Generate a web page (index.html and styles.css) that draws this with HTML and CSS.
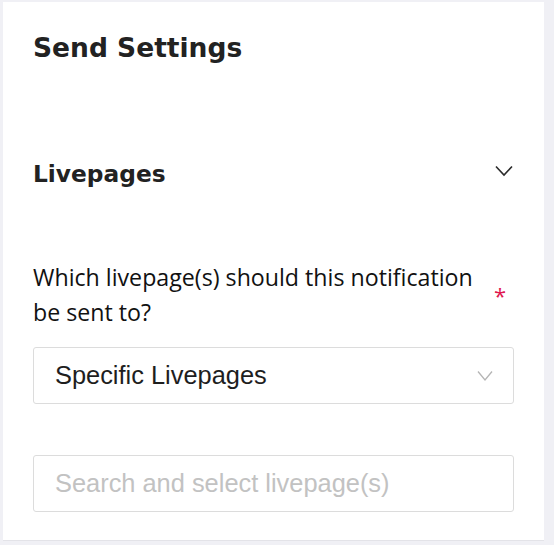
FILE: index.html
```html
<!DOCTYPE html>
<html>
<head>
<meta charset="utf-8">
<link rel="stylesheet" href="styles.css">
</head>
<body>
<div class="panel">
  <h1 class="title">Send Settings</h1>
  <div class="section-head">
    <h2 class="section-title">Livepages</h2>
    <svg class="chev" width="18" height="12" viewBox="0 0 18 12"><path d="M1 1.5 L9 10 L17 1.5" fill="none" stroke="#2b2b2b" stroke-width="1.6"/></svg>
  </div>
  <div class="field-label">
    <span class="label-text">Which livepage(s) should this notification be sent to?</span>
    <span class="req">*</span>
  </div>
  <div class="select">
    <span class="select-value">Specific Livepages</span>
    <svg class="select-chev" width="16" height="12" viewBox="0 0 16 12"><path d="M1 1.5 L8 10 L15 1.5" fill="none" stroke="#b5b5b5" stroke-width="1.3"/></svg>
  </div>
  <div class="search">
    <span class="placeholder">Search and select livepage(s)</span>
  </div>
</div>
</body>
</html>
```

FILE: styles.css
```css
html, body {
  margin: 0;
  padding: 0;
  background: #f0f0f5;
}
body {
  width: 554px;
  height: 545px;
  overflow: hidden;
}
.panel {
  margin: 2px 0 0 3px;
  width: 541px;
  height: 539px;
  box-sizing: border-box;
  background: #ffffff;
  border-bottom: 1px solid #e3e3e8;
  padding: 0 30px;
  display: flex;
  flex-direction: column;
}
.title {
  margin: 29px 0 0 0;
  font-family: "DejaVu Sans", sans-serif;
  font-weight: bold;
  font-size: 26.5px;
  line-height: 34px;
  color: #222222;
}
.section-head {
  margin-top: 94px;
  display: flex;
  align-items: center;
  justify-content: space-between;
}
.section-title {
  margin: 0;
  font-family: "DejaVu Sans", sans-serif;
  font-weight: bold;
  font-size: 23.3px;
  line-height: 30px;
  color: #222222;
}
.chev {
  margin-right: 1px;
  margin-top: -6px;
}
.field-label {
  margin-top: 71px;
  display: flex;
  align-items: flex-start;
  justify-content: space-between;
}
.label-text {
  width: 447px;
  font-family: "Open Sans", sans-serif;
  font-size: 23.2px;
  line-height: 35px;
  color: #111111;
}
.req {
  font-family: "Open Sans", sans-serif;
  color: #e0174f;
  font-size: 22px;
  line-height: 22px;
  margin-top: 24px;
  margin-right: 8px;
}
.select {
  margin-top: 17px;
  width: 481px;
  height: 57px;
  box-sizing: border-box;
  border: 1px solid #dcdcdc;
  border-radius: 3px;
  display: flex;
  align-items: center;
  justify-content: space-between;
  padding: 0 20px 0 21px;
}
.select-value {
  font-family: "Liberation Sans", Arial, sans-serif;
  font-size: 25.4px;
  color: #1e1e1e;
}
.search {
  margin-top: 51px;
  width: 481px;
  height: 57px;
  box-sizing: border-box;
  border: 1px solid #dcdcdc;
  border-radius: 3px;
  display: flex;
  align-items: center;
  padding: 0 21px;
}
.placeholder {
  font-family: "Liberation Sans", Arial, sans-serif;
  font-size: 25.4px;
  color: #c2c2c2;
}
```
